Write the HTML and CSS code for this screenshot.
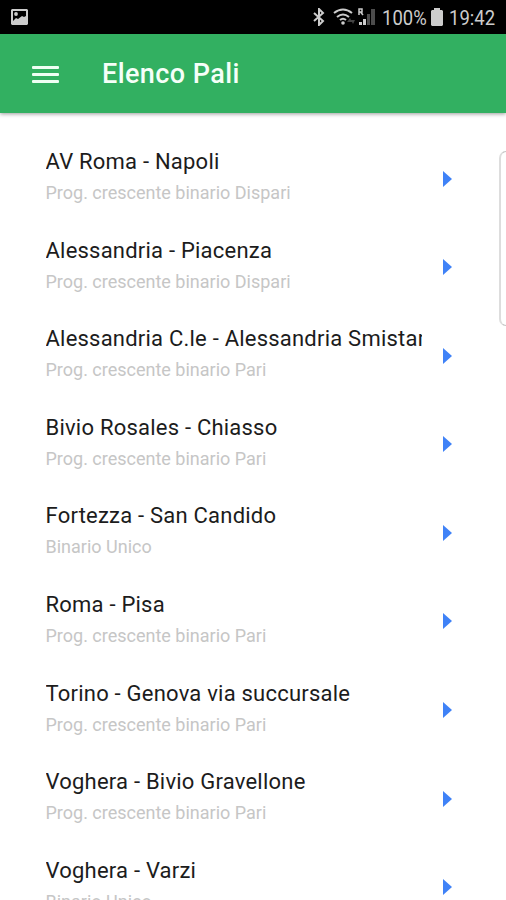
FILE: index.html
```html
<!DOCTYPE html>
<html lang="it"><head><meta charset="utf-8"><title>Elenco Pali</title><link rel="stylesheet" href="styles.css"></head>
<body>
<div class="status">
<svg class="pic" width="17" height="16" viewBox="0 0 17 16"><path fill="#ccc" fill-rule="evenodd" d="M1 0h15l1 1v14l-1 1H1l-1-1V1zM2 2v10l3-3 2 1 4-3 2 1 2-1V2z"/><circle cx="5" cy="5" r="1.9" fill="#ccc"/></svg>
<svg class="bt" width="12" height="18" viewBox="0 0 12 18"><path d="M1 5l9 8-4 4V1l4 4-9 8" fill="none" stroke="#ccc" stroke-width="2"/></svg>
<svg class="wifi" width="24" height="18" viewBox="0 0 24 18"><g fill="none" stroke="#ccc" stroke-width="2"><path d="M1 5q9-7 18 0M4 9q6-5 12 0M7 12q3-2.500 6 0"/></g><circle cx="10" cy="15" r="1.8" fill="#ccc"/><path d="M14 14l3-4 2 4zM18 12h4l-2 4z" fill="#444"/></svg>
<svg class="signal" width="18" height="18" viewBox="0 0 18 18"><path d="M1 7V1h3v3H1M2.500 4L5 7" fill="none" stroke="#ccc" stroke-width="1.500"/><path d="M1 14h3v3H1zM5 11h3v6H5z" fill="#ccc"/><path d="M9 6h3v11H9zM13 1h4v16h-4z" fill="#4c4c4c"/></svg>
<span class="pct">100%</span>
<svg class="bat" width="12" height="18" viewBox="0 0 12 18"><path d="M3 0h6v2h2l1 1v14l-1 1H1l-1-1V3l1-1h2z" fill="#ccc"/></svg>
<span class="time">19:42</span>
</div>
<header class="bar"><div class="menu"><i></i><i></i><i></i></div><h1>Elenco Pali</h1></header>
<main class="list">
<div class="row"><div class="text"><h2>AV Roma - Napoli</h2><p>Prog. crescente binario Dispari</p></div><b class="arrow"></b></div>
<div class="row"><div class="text"><h2>Alessandria - Piacenza</h2><p>Prog. crescente binario Dispari</p></div><b class="arrow"></b></div>
<div class="row"><div class="text"><h2>Alessandria C.le - Alessandria Smistamento</h2><p>Prog. crescente binario Pari</p></div><b class="arrow"></b></div>
<div class="row"><div class="text"><h2>Bivio Rosales - Chiasso</h2><p>Prog. crescente binario Pari</p></div><b class="arrow"></b></div>
<div class="row"><div class="text"><h2>Fortezza - San Candido</h2><p>Binario Unico</p></div><b class="arrow"></b></div>
<div class="row"><div class="text"><h2>Roma - Pisa</h2><p>Prog. crescente binario Pari</p></div><b class="arrow"></b></div>
<div class="row"><div class="text"><h2>Torino - Genova via succursale</h2><p>Prog. crescente binario Pari</p></div><b class="arrow"></b></div>
<div class="row"><div class="text"><h2>Voghera - Bivio Gravellone</h2><p>Prog. crescente binario Pari</p></div><b class="arrow"></b></div>
<div class="row"><div class="text"><h2>Voghera - Varzi</h2><p>Binario Unico</p></div><b class="arrow"></b></div>
</main>
<div class="handle"></div>
</body></html>
```
FILE: styles.css
```css
* { box-sizing: border-box; margin: 0; padding: 0; }
body { width: 506px; height: 900px; overflow: hidden; position: relative; background: #fff; font-family: Roboto, sans-serif; }
.status { height: 34px; background: #000; display: flex; align-items: center; color: #ccc; font-size: 21px; padding-left: 11px; }
.status svg { flex: none; }
.pic { margin-right: 285px; }
.bt { margin-right: 8px; }
.wifi { margin-right: 1px; }
.signal { margin-right: 6px; }
.bat { margin-right: 6px; }
.pct, .time { flex: none; transform: scaleX(.88); transform-origin: left; padding-top: 2px; }
.pct { width: 49px; }
.bar { height: 79px; background: #32b061; display: flex; align-items: center; padding: 1px 0 0 32px; box-shadow: 0 1px 4px rgba(0,0,0,.4); }
.menu { width: 27px; display: flex; flex-direction: column; gap: 4px; margin-right: 43px; }
.menu i { height: 3px; border-radius: 1px; background: #eefff3; }
.menu i + i { margin-top: 0; }
h1 { color: #f5fff8; font-size: 27px; font-weight: 500; letter-spacing: .42px; }
.list { padding-top: 33px; }
.row { height: 88.6px; display: flex; padding-left: 45.5px; }
.text { width: 376.5px; overflow: hidden; }
h2 { font-size: 22px; line-height: 32px; font-weight: 400; letter-spacing: .22px; color: #1c1c1c; white-space: nowrap; }
p { font-size: 18px; line-height: 30px; color: #c6c6c6; white-space: nowrap; }
.arrow { margin: 24.5px 0 0 21px; width: 0; height: 0; border: 8px solid transparent; border-left: 9px solid #3f82f7; border-right: 0; }
.handle { position: absolute; left: 499px; top: 151px; width: 20px; height: 175px; border: 1px solid #c4c4c4; border-left: 2px solid #ddd; border-radius: 7px; background: #fff; }
```
